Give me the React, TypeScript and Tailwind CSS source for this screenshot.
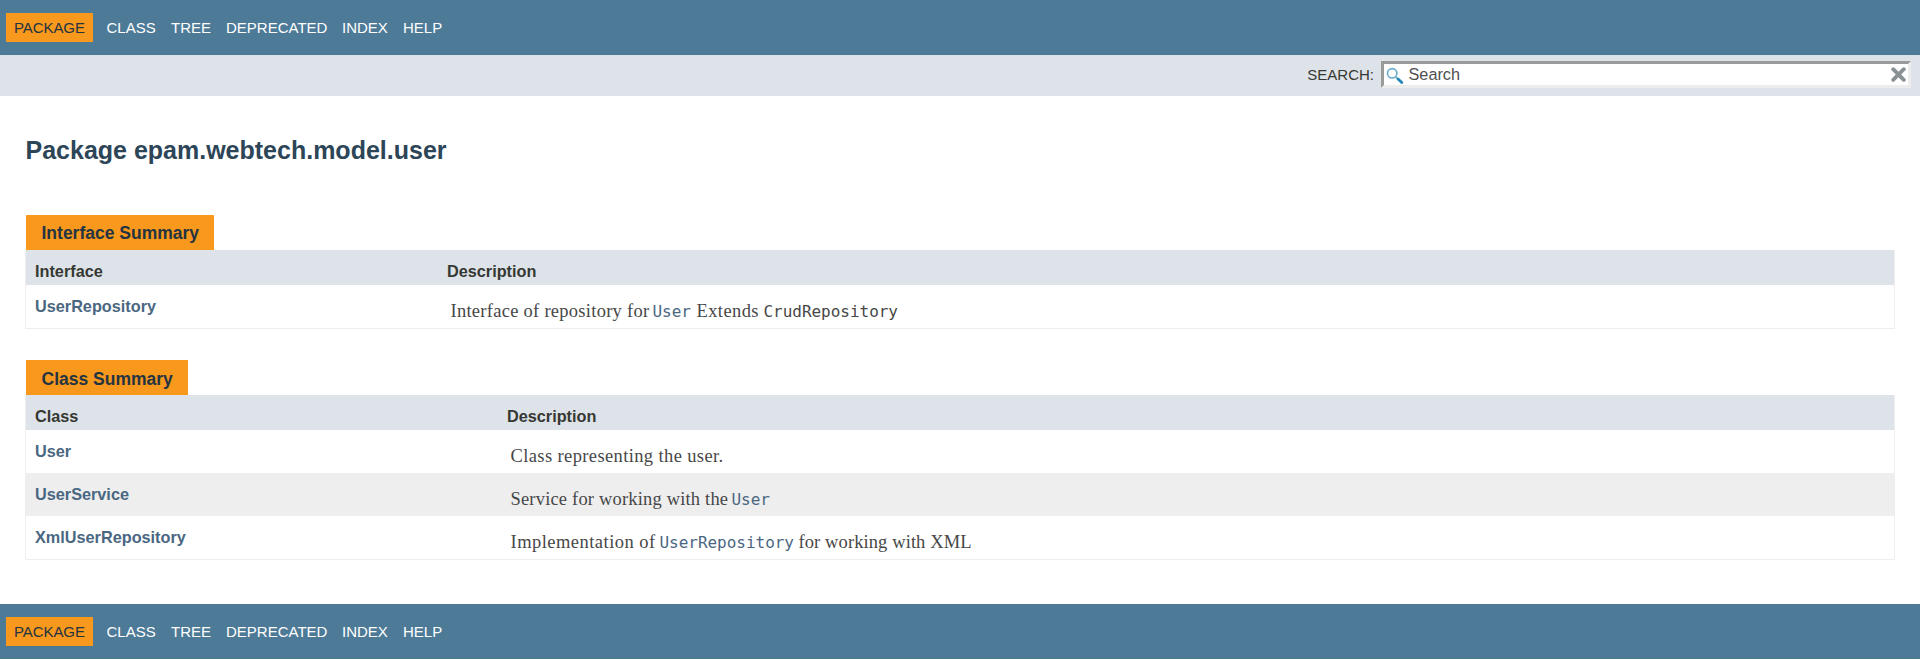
import React from "react";

const sans = "font-['Liberation_Sans',Arial,sans-serif]";

function NavBar() {
  return (
    <nav className="flex h-[55px] items-start bg-[#4d7a97] pl-[6px] pt-[13px] text-[15px] leading-[17px] text-white">
      <span className="mr-[13.5px] h-[29px] w-[87px] bg-[#f8981d] pl-[8px] pt-[6px] tracking-[-0.08px] text-[#253441]">PACKAGE</span>
      <ul className="flex pt-[6px]">
        <li className="w-[64.5px]">CLASS</li>
        <li className="w-[55px]">TREE</li>
        <li className="w-[116px]">DEPRECATED</li>
        <li className="w-[61px]">INDEX</li>
        <li>HELP</li>
      </ul>
    </nav>
  );
}

function SearchBar() {
  return (
    <div className="flex h-[41px] justify-end bg-[#dee3e9] pr-[9px] pt-[6px]">
      <label className="mr-[7px] pt-[5px] text-[15px] leading-[17px] text-[#353833]">SEARCH:</label>
      <div className="flex h-[27px] w-[530px] items-center border-[3px] border-b-[#ededed] border-l-[#9a9a9a] border-r-[#ededed] border-t-[#9a9a9a] bg-white pl-[2px] pr-[2px]">
        <svg width="18" height="18" viewBox="0 0 18 18" fill="none" className="mt-[3px]">
          <circle cx="6.2" cy="6.3" r="4.7" stroke="#67abc9" strokeWidth="1.6" />
          <path d="M9.6 9.7l2 2" stroke="#67abc9" strokeWidth="1.6" />
          <path d="M12 12l3.8 3.6" stroke="#2387b9" strokeWidth="2.8" strokeLinecap="round" />
        </svg>
        <span className="ml-[4.5px] flex-1 text-[16.25px] leading-[19px] text-[#505050]">Search</span>
        <svg width="15" height="15" viewBox="0 0 15 15">
          <path d="M2.2 2.2l10.6 10.6M12.8 2.2l-10.6 10.6" stroke="#899194" strokeWidth="3.8" strokeLinecap="round" />
        </svg>
      </div>
    </div>
  );
}

function Prose({ className, children }: { className: string; children: React.ReactNode }) {
  return (
    <span className={`${className} shrink-0 whitespace-nowrap font-['Liberation_Serif',serif] text-[18.5px]`}>
      {children}
    </span>
  );
}

function Code({ link, width = "", children }: { link?: boolean; width?: string; children: React.ReactNode }) {
  return (
    <code
      className={`${width} shrink-0 font-['DejaVu_Sans_Mono',monospace] text-[16px] tracking-[-0.03px] ${link ? "text-[#4a6782]" : ""}`}
    >
      {children}
    </code>
  );
}

type Row = { name: string; description: React.ReactNode };

function Summary({ caption, tab, heading, column, rows }: {
  caption: string;
  tab: string;
  heading: string;
  column: string;
  rows: Row[];
}) {
  return (
    <section className="w-[1870px]">
      <h2 className={`${tab} ml-px h-[35px] bg-[#f8981d] pl-[15.5px] text-[17.5px] font-bold leading-[20px] text-[#253441]`}>
        {caption}
      </h2>
      <div className="border border-t-0 border-[#eee]">
        <div className="flex h-[35px] bg-[#dee3e9] pl-[9px] pt-[12px] text-[16.25px] font-bold leading-[18px] text-[#353833]">
          <span className={`${column} shrink-0`}>{heading}</span>
          <span>Description</span>
        </div>
        {rows.map((row) => (
          <div key={row.name} className="flex h-[43px] pl-[9px] pt-[12px] even:bg-white odd:bg-[#eeeeef] first:bg-white">
            <a className={`${column} shrink-0 text-[16.25px] font-bold leading-[18px] text-[#4a6782]`}>{row.name}</a>
            <div className="flex items-baseline pl-[3.5px] pt-[3px] leading-[22px] text-[#474747]">{row.description}</div>
          </div>
        ))}
      </div>
    </section>
  );
}

const interfaces: Row[] = [
  {
    name: "UserRepository",
    description: (
      <>
        <Prose className="w-[202px] tracking-[0.27px]">Interface of repository for</Prose>
        <Code link width="w-[44px]">User</Code>
        <Prose className="w-[67px] tracking-[0.4px]">Extends</Prose>
        <Code>CrudRepository</Code>
      </>
    ),
  },
];

const classes: Row[] = [
  { name: "User", description: <Prose className="tracking-[0.38px]">Class representing the user.</Prose> },
  {
    name: "UserService",
    description: (
      <>
        <Prose className="w-[221px] tracking-[0.18px]">Service for working with the</Prose>
        <Code link>User</Code>
      </>
    ),
  },
  {
    name: "XmlUserRepository",
    description: (
      <>
        <Prose className="w-[149px] tracking-[0.47px]">Implementation of</Prose>
        <Code link width="w-[139px]">UserRepository</Code>
        <Prose className="tracking-[0.1px]">for working with XML</Prose>
      </>
    ),
  },
];

export default function App() {
  return (
    <div className={`${sans} h-[660px] w-[1920px] overflow-hidden bg-white`}>
      <NavBar />
      <SearchBar />
      <main className="h-[508px] pl-[25px] pt-[40px]">
        <h1 className="mb-[51px] h-[28px] pl-[0.5px] text-[25px] font-bold leading-[28px] text-[#2c4557]">
          Package epam.webtech.model.user
        </h1>
        <Summary caption="Interface Summary" tab="w-[188px] pt-[8px]" heading="Interface" column="w-[412px]" rows={interfaces} />
        <div className="h-[31px]" />
        <Summary caption="Class Summary" tab="w-[162px] pt-[9px]" heading="Class" column="w-[472px]" rows={classes} />
      </main>
      <NavBar />
    </div>
  );
}
